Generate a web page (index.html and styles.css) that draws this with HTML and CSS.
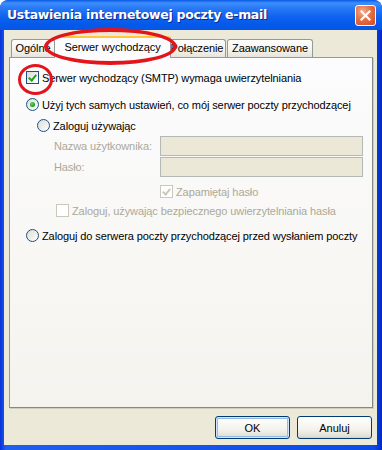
FILE: index.html
```html
<!DOCTYPE html>
<html lang="pl">
<head>
    <meta charset="UTF-8">
    <title>Ustawienia internetowej poczty e-mail</title>
    <link rel="stylesheet" href="styles.css">
</head>
<body>
    <div class="window">
        <div class="titlebar">
            <span class="title">Ustawienia internetowej poczty e-mail</span>
            <span class="close">
                <svg width="11" height="11" viewBox="0 0 11 11">
                    <path d="M1.5 1.5 L9.5 9.5 M9.5 1.5 L1.5 9.5" stroke="#fff" stroke-width="2.2" stroke-linecap="square"/>
                </svg>
            </span>
        </div>

        <div class="client">
            <div class="tabs">
                <div class="tab tab-general">Ogólne</div>
                <div class="tab tab-active">Serwer wychodzący</div>
                <div class="tab tab-conn">Połączenie</div>
                <div class="tab tab-adv">Zaawansowane</div>
            </div>

            <div class="panel">
                <label class="row row-auth">
                    <span class="check checked"></span>
                    <span>Serwer wychodzący (SMTP) wymaga uwierzytelniania</span>
                </label>
                <label class="row row-same">
                    <span class="radio selected"></span>
                    <span>Użyj tych samych ustawień, co mój serwer poczty przychodzącej</span>
                </label>
                <label class="row row-login">
                    <span class="radio"></span>
                    <span>Zaloguj używając</span>
                </label>

                <div class="fields">
                    <div class="field">
                        <span class="field-label">Nazwa użytkownika:</span>
                        <span class="textbox"></span>
                    </div>
                    <div class="field">
                        <span class="field-label">Hasło:</span>
                        <span class="textbox"></span>
                    </div>
                </div>

                <label class="row row-remember disabled">
                    <span class="check checked"></span>
                    <span>Zapamiętaj hasło</span>
                </label>
                <label class="row row-spa disabled">
                    <span class="check"></span>
                    <span>Zaloguj, używając bezpiecznego uwierzytelniania hasła</span>
                </label>
                <label class="row row-before">
                    <span class="radio"></span>
                    <span>Zaloguj do serwera poczty przychodzącej przed wysłaniem poczty</span>
                </label>
            </div>

            <div class="buttons">
                <button class="btn btn-default">OK</button>
                <button class="btn">Anuluj</button>
            </div>
        </div>

        <!-- red marks drawn on top of the screenshot -->
        <div class="mark mark-tab"></div>
        <div class="mark mark-check"></div>
    </div>
</body>
</html>
```

FILE: styles.css
```css
body {
    margin: 0;
    padding: 0;
    background-color: #fff;
    font-family: "Liberation Sans", Arial, sans-serif;
    font-size: 11px;
    letter-spacing: -0.1px;
    color: #000;
}

.window {
    position: relative;
    width: 382px;
    height: 450px;
    box-sizing: border-box;
    display: flex;
    flex-direction: column;
    background: linear-gradient(to right, #0831d9 0%, #1f5ff0 1.5%, #0a4ae6 98%, #0029c0 100%);
    border-radius: 8px 8px 0 0;
    overflow: hidden;
    padding: 0 5px 5px 4px;
}

.titlebar {
    height: 30px;
    margin: 0 -5px 0 -4px;
    padding: 0 5px 0 7px;
    display: flex;
    align-items: center;
    justify-content: space-between;
    border-radius: 8px 8px 0 0;
    background: linear-gradient(to bottom, #0a5ae6 0%, #3d8ffc 10%, #2b7bf6 25%, #0f63ee 55%, #055aeb 80%, #0656e2 100%);
}

.title {
    color: #fff;
    font-family: "DejaVu Sans", sans-serif;
    font-weight: bold;
    font-size: 12.5px;
    letter-spacing: -0.3px;
    text-shadow: 1px 1px 0 #0a2a8a;
    margin-top: -1px;
}

.close {
    width: 19px;
    height: 19px;
    margin-right: 1px;
    display: flex;
    align-items: center;
    justify-content: center;
    border: 1px solid #fff;
    border-radius: 3px;
    background: radial-gradient(circle at 35% 30%, #f4ae94 0%, #e66f45 45%, #d24b22 100%);
}

.client {
    flex: 1;
    background-color: #ece9d8;
    padding: 4px 4px 0 5px;
    display: flex;
    flex-direction: column;
}

/* tabs */
.tabs {
    display: flex;
    align-items: flex-end;
    height: 23px;
    padding-left: 2px;
    position: relative;
    z-index: 1;
}

.tab {
    height: 18px;
    box-sizing: border-box;
    border: 1px solid #919b9c;
    border-bottom: none;
    border-radius: 3px 3px 0 0;
    background: linear-gradient(to bottom, #fefefe 0%, #f4f3ee 60%, #e6e4da 100%);
    padding: 2px 0 0 0;
    margin-right: 1px;
    text-align: center;
    white-space: nowrap;
}

.tab-general { width: 44px; }
.tab-conn { width: 58px; margin-left: -1px; }
.tab-adv { width: 86px; }

.tab-active {
    height: 22px;
    width: 117px;
    margin: 0 -2px -1px -2px;
    padding-top: 3px;
    background: #fcfcfe;
    border-top: 2px solid #ffc83c;
    z-index: 2;
}

.panel {
    height: 351px;
    box-sizing: border-box;
    border: 1px solid #919b9c;
    border-right-color: #7f8a8b;
    border-bottom-color: #7f8a8b;
    box-shadow: 1px 1px 0 #d0cdbf;
    background: linear-gradient(to bottom, #fcfcfe 0%, #f7f6f2 70%, #f4f3ee 100%);
    padding: 13px 0 0 16px;
    display: flex;
    flex-direction: column;
    align-items: flex-start;
}

.row {
    display: flex;
    align-items: center;
    gap: 3px;
    height: 13px;
    white-space: nowrap;
}

.row-same { margin-top: 14px; }
.row-login { margin-top: 8px; margin-left: 11px; }
.row-remember { margin-top: 8px; margin-left: 134px; }
.row-spa { margin-top: 6px; margin-left: 30px; }
.row-before { margin-top: 12px; }

.disabled { color: #aca899; }

/* checkbox */
.check {
    width: 13px;
    height: 13px;
    box-sizing: border-box;
    border: 1px solid #1c5180;
    background: linear-gradient(135deg, #dcdcd7 0%, #f4f4f0 70%, #ffffff 100%);
    position: relative;
    flex: none;
}

.check.checked::after {
    content: "";
    position: absolute;
    left: 3px;
    top: 1px;
    width: 3px;
    height: 6px;
    border: solid #21a121;
    border-width: 0 2px 2px 0;
    transform: rotate(40deg);
}

.disabled .check {
    border-color: #cac8bb;
    background: #fff;
}

.disabled .check.checked::after {
    border-color: #cac8bb;
}

/* radio */
.radio {
    width: 13px;
    height: 13px;
    box-sizing: border-box;
    border: 1px solid #1c5180;
    border-radius: 50%;
    background: linear-gradient(135deg, #dcdcd7 0%, #f4f4f0 70%, #ffffff 100%);
    position: relative;
    flex: none;
}

.radio.selected::after {
    content: "";
    position: absolute;
    left: 3px;
    top: 3px;
    width: 5px;
    height: 5px;
    border-radius: 50%;
    background: radial-gradient(circle at 40% 35%, #5edb5e 0%, #21a121 60%, #1a8a1a 100%);
}

/* disabled text fields */
.fields {
    margin-top: 4px;
    margin-left: 28px;
    display: flex;
    flex-direction: column;
    gap: 1px;
}

.field {
    display: flex;
    align-items: center;
    color: #aca899;
}

.field-label {
    width: 106px;
}

.textbox {
    width: 203px;
    height: 20px;
    box-sizing: border-box;
    border: 1px solid #b5b9b6;
    background-color: #ebe8d7;
}

/* bottom buttons */
.buttons {
    display: flex;
    justify-content: flex-end;
    gap: 7px;
    padding: 8px 1px 0 0;
}

.btn {
    width: 75px;
    height: 23px;
    font-family: "Liberation Sans", Arial, sans-serif;
    font-size: 11px;
    color: #000;
    border: 1px solid #003c74;
    border-radius: 3px;
    background: linear-gradient(to bottom, #ffffff 0%, #f3f2ec 60%, #e3e1d6 90%, #d6d0c5 100%);
    padding: 0;
}

.btn-default {
    box-shadow: inset 0 0 0 1px #cee7ff, inset 0 0 0 2px #98b8ea;
}

/* annotation marks */
.mark {
    position: absolute;
    box-sizing: border-box;
    border: 4px solid #e3151b;
    border-radius: 50%;
    z-index: 5;
}

.mark-tab {
    left: 44px;
    top: 28px;
    width: 133px;
    height: 37px;
}

.mark-check {
    left: 18px;
    top: 64px;
    width: 35px;
    height: 31px;
    border-width: 3.5px;
}
```
